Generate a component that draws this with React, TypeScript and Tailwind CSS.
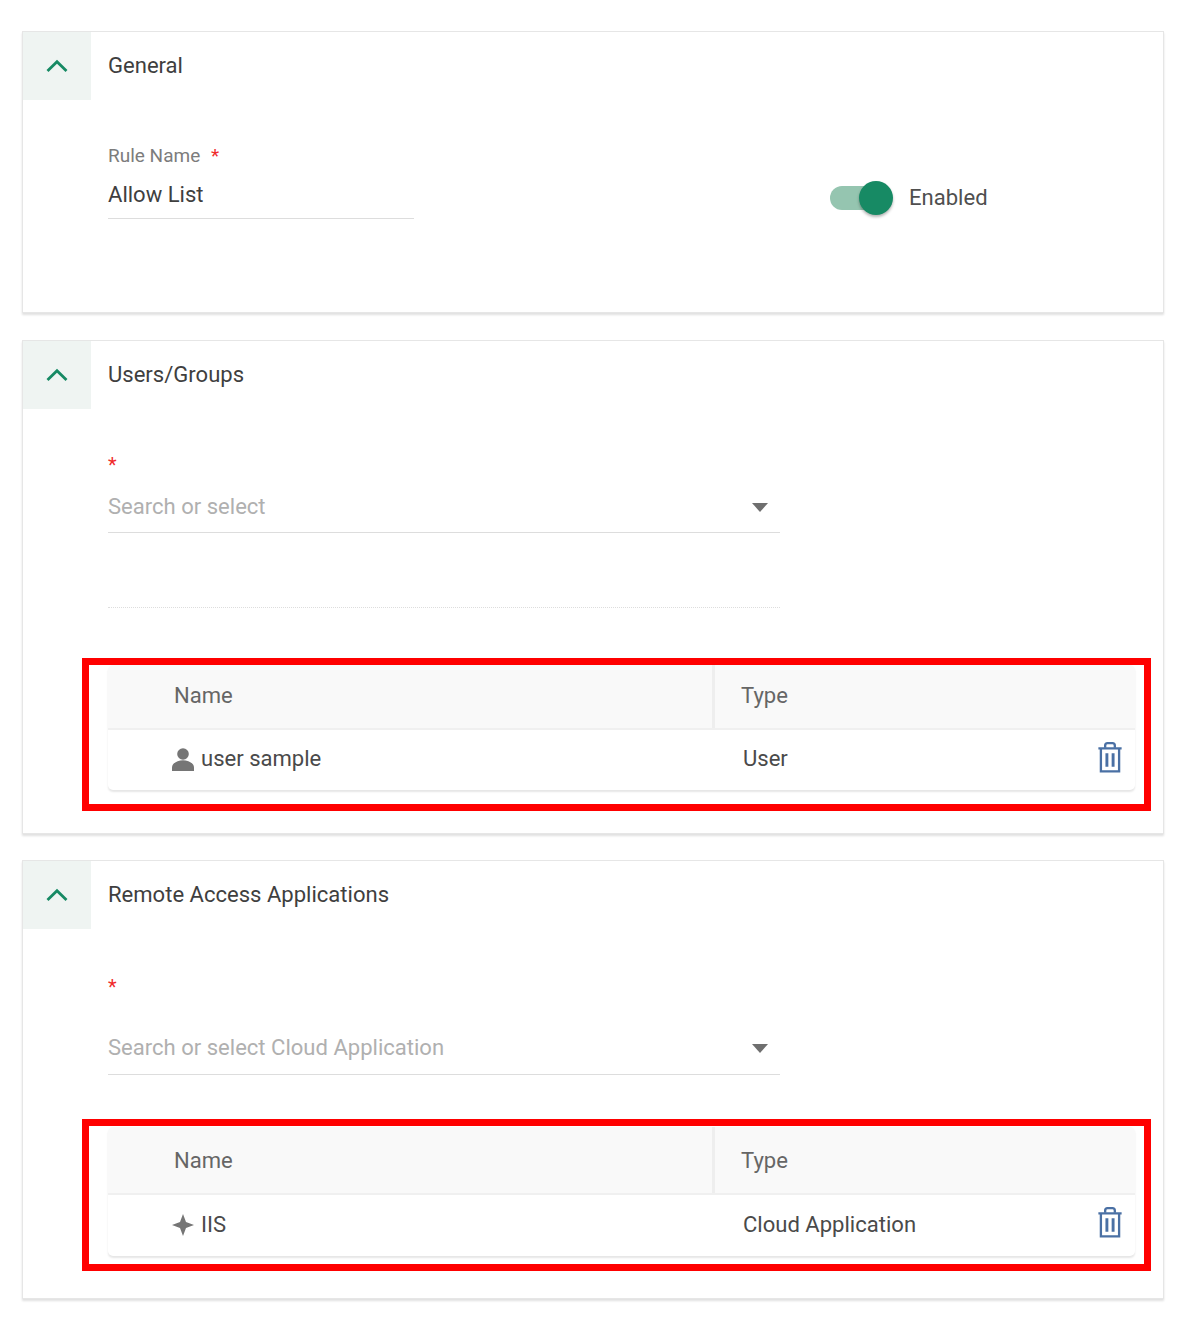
import React from 'react'

const ChevronUp = () => (
  <svg width="22" height="14" viewBox="0 0 22 14" fill="none" stroke="#178a64" strokeWidth="2.8">
    <path d="M1.5 12L11 2.8 20.5 12" />
  </svg>
)

const TrashIcon = () => (
  <svg width="26" height="31" viewBox="0 0 26 32" fill="none" stroke="#4a70a4" strokeWidth="2.4">
    <path d="M1 6.5h24" />
    <path d="M8 6V3.8C8 2.2 9 1.2 10.5 1.2h5C17 1.2 18 2.2 18 3.8V6" />
    <path d="M3.6 7v23.4h18.8V7" />
    <path d="M9.8 11.5v14M16.2 11.5v14" strokeWidth="3" />
  </svg>
)

const UserIcon = () => (
  <svg width="22" height="23" viewBox="0 0 22 23" fill="#757575">
    <circle cx="11" cy="6" r="5.8" />
    <path d="M0 23v-3.5C0 15 6 12.2 11 12.2s11 2.8 11 7.3V23z" />
  </svg>
)

const SparkIcon = () => (
  <svg width="22" height="22" viewBox="0 0 22 22" fill="#757575">
    <path d="M11 0l3 8 8 3-8 3-3 8-3-8-8-3 8-3z" />
  </svg>
)

const Caret = () => (
  <div className="mt-[1px] w-0 h-0 border-l-[8px] border-r-[8px] border-t-[9px] border-l-transparent border-r-transparent border-t-[#6f6f6f]" />
)

const Section: React.FC<{ title: string; height: string; children: React.ReactNode }> = ({ title, height, children }) => (
  <section className={`w-[1142px] ${height} shrink-0 bg-white border border-[#e6e6e6] shadow-[0_2px_2px_rgba(0,0,0,0.12)]`}>
    <div className="flex h-[68px]">
      <div className="w-[68px] h-[68px] bg-[#eff4f2] flex items-center justify-center">
        <ChevronUp />
      </div>
      <h2 className="ml-[17px] mt-[19px] text-[22.06px] leading-[30px] font-normal text-[#3f3f3f]">{title}</h2>
    </div>
    {children}
  </section>
)

const ItemTable: React.FC<{
  icon: React.ReactNode
  name: string
  type: string
  boxClass: string
  headerClass: string
  labelClass: string
  rowClass: string
}> = ({ icon, name, type, boxClass, headerClass, labelClass, rowClass }) => (
  <div className={`ml-[59px] w-[1069px] border-[7px] border-[#ff0000] pl-[19px] bg-white ${boxClass}`}>
    <div className="w-[1027px] rounded-[5px] shadow-[0_2px_2px_rgba(0,0,0,0.1)] bg-white overflow-hidden">
      <div className={`flex bg-[#f9f9f9] border-b-2 border-[#f0f0f0] text-[#666666] text-[22.06px] ${headerClass}`}>
        <div className={`w-[607px] h-full pl-[66px] flex items-center border-r-[3px] border-[#eeeeee] ${labelClass}`}>Name</div>
        <div className={`pl-[26px] flex items-center ${labelClass}`}>Type</div>
      </div>
      <div className={`flex items-center pb-[2px] text-[22.06px] text-[#4a4a4a] ${rowClass}`}>
        <div className="w-[607px] pl-[64px] flex items-center gap-[7px]">
          {icon}
          <span>{name}</span>
        </div>
        <div className="pl-[28px] flex-1">{type}</div>
        <div className="mr-[12px] -mt-[4px]">
          <TrashIcon />
        </div>
      </div>
    </div>
  </div>
)

export default function App() {
  return (
    <div className="w-[1200px] h-[1323px] bg-white pl-[22px] pt-[31px] font-['Roboto',sans-serif] flex flex-col">
      <Section title="General" height="h-[282px]">
        <div className="flex pt-[44px]">
          <div className="ml-[85px] w-[306px]">
            <div className="text-[19px] leading-[24px] text-[#7c7c7c]">
              Rule Name <span className="ml-[6px] text-[#f02b2b]">*</span>
            </div>
            <div className="mt-[12px] pb-[8px] text-[22.06px] leading-[30px] text-[#3f3f3f] border-b border-[#dddddd]">Allow List</div>
          </div>
          <div className="ml-[416px] mt-[37px] flex items-center h-[34px]">
            <div className="relative w-[63px] h-[24px]">
              <div className="w-[50px] h-[24px] rounded-full bg-[#95c5b0]" />
              <div className="absolute right-0 top-[-5px] w-[34px] h-[34px] rounded-full bg-[#178a64] shadow-[0_2px_3px_rgba(0,0,0,0.3)]" />
            </div>
            <span className="ml-[16px] text-[22.06px] text-[#4f4f4f]">Enabled</span>
          </div>
        </div>
      </Section>

      <div className="h-[27px] shrink-0" />

      <Section title="Users/Groups" height="h-[494px]">
        <div className="ml-[85px] w-[672px] pt-[41px]">
          <div className="h-[30px] text-[20px] leading-[30px] text-[#f02b2b]">*</div>
          <div className="mt-[3px] h-[50px] flex items-center justify-between border-b border-[#dddddd] pb-[2px]">
            <span className="text-[22.06px] text-[#b0b0b0]">Search or select</span>
            <span className="mr-[12px]"><Caret /></span>
          </div>
          <div className="h-[75px] border-b border-dotted border-[#dddddd]" />
        </div>
        <div className="mt-[50px]">
          <ItemTable
            icon={<UserIcon />}
            name="user sample"
            type="User"
            boxClass="h-[153px]"
            headerClass="h-[65px]"
            labelClass="pb-[2px]"
            rowClass="h-[60px]"
          />
        </div>
      </Section>

      <div className="h-[26px] shrink-0" />

      <Section title="Remote Access Applications" height="h-[439px]">
        <div className="ml-[85px] w-[672px] pt-[43px]">
          <div className="h-[30px] text-[20px] leading-[30px] text-[#f02b2b]">*</div>
          <div className="mt-[23px] h-[50px] flex items-center justify-between border-b border-[#dddddd] pb-[4px]">
            <span className="text-[22.06px] text-[#b0b0b0]">Search or select Cloud Application</span>
            <span className="mr-[12px]"><Caret /></span>
          </div>
        </div>
        <div className="mt-[44px]">
          <ItemTable
            icon={<SparkIcon />}
            name="IIS"
            type="Cloud Application"
            boxClass="h-[152px] pt-px"
            headerClass="h-[68px]"
            labelClass="pt-[2px]"
            rowClass="h-[61px]"
          />
        </div>
      </Section>
    </div>
  )
}
